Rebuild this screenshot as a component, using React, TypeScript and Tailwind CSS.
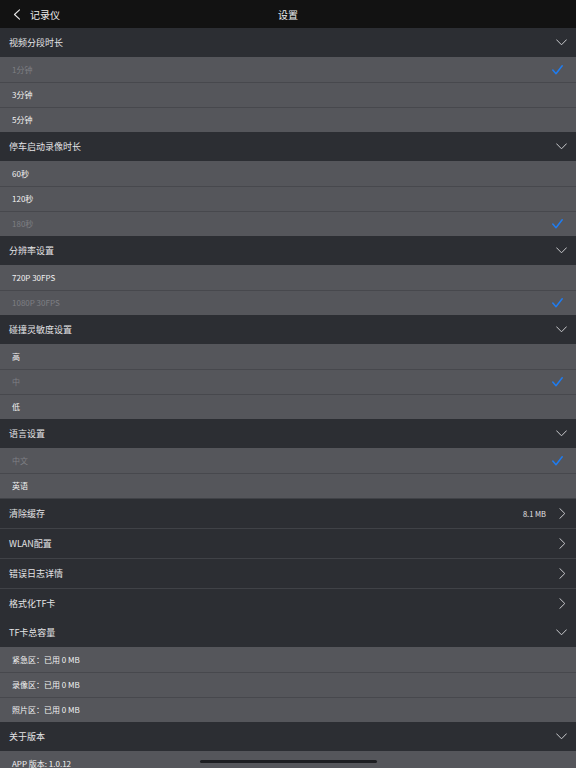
import React from 'react';

const FONT = { fontFamily: '"Noto Sans CJK SC", "Noto Sans", sans-serif' };

interface Section {
  title: string;
  options: string[];
  selected: number;
}

const SECTIONS: Section[] = [
  { title: '视频分段时长', options: ['1分钟', '3分钟', '5分钟'], selected: 0 },
  { title: '停车启动录像时长', options: ['60秒', '120秒', '180秒'], selected: 2 },
  { title: '分辨率设置', options: ['720P 30FPS', '1080P 30FPS'], selected: 1 },
  { title: '碰撞灵敏度设置', options: ['高', '中', '低'], selected: 1 },
  { title: '语言设置', options: ['中文', '英语'], selected: 0 },
];

const LINKS = [
  { title: '清除缓存', value: '8.1 MB' },
  { title: 'WLAN配置' },
  { title: '错误日志详情' },
  { title: '格式化TF卡' },
];

const TF_ROWS = ['紧急区：已用 0 MB', '录像区：已用 0 MB', '照片区：已用 0 MB'];

function ChevronDown() {
  return (
    <svg width="11" height="7" viewBox="0 0 11 7" className="shrink-0">
      <path d="M0.6 0.8 L5.5 5.8 L10.4 0.8" fill="none" stroke="#c9cacd" strokeWidth="1" strokeLinecap="round" strokeLinejoin="round" />
    </svg>
  );
}

function ChevronRight() {
  return (
    <svg width="7" height="11" viewBox="0 0 7 11" className="shrink-0">
      <path d="M0.8 0.6 L5.8 5.5 L0.8 10.4" fill="none" stroke="#c9cacd" strokeWidth="1" strokeLinecap="round" strokeLinejoin="round" />
    </svg>
  );
}

function Check() {
  return (
    <svg width="11" height="10" viewBox="0 0 11 10" className="shrink-0">
      <path d="M0.8 5 L4 8.8 L10.2 0.8" fill="none" stroke="#1f7cf0" strokeWidth="1.5" strokeLinecap="round" strokeLinejoin="round" />
    </svg>
  );
}

function Header({ title }: { title: string }) {
  return (
    <div className="h-[29px] bg-[#2c2e33] flex items-center justify-between pl-[9px] pr-[9px]">
      <span className="text-[9px] text-[#e4e4e6]">{title}</span>
      <ChevronDown />
    </div>
  );
}

function OptionRow({ label, active, first }: { label: string; active?: boolean; first?: boolean }) {
  return (
    <div
      className={`h-[25px] bg-[#55565b] flex items-center justify-between pl-[12px] pr-[13px] ${
        first ? '' : 'border-t border-[#47484d]'
      }`}
    >
      <span className={`text-[8px] ${active ? 'text-[#7e7f84]' : 'text-[#f2f2f2]'}`}>{label}</span>
      {active && <Check />}
    </div>
  );
}

export default function App() {
  return (
    <div className="relative w-[576px] h-[768px] overflow-hidden bg-[#55565b]" style={FONT}>
      {/* nav bar */}
      <div className="h-[28px] bg-[#121212] flex items-center relative">
        <div className="flex items-center pl-[13px] gap-[9px]">
          <svg width="8" height="11" viewBox="0 0 8 11">
            <path d="M6.5 0.8 L1.5 5.5 L6.5 10.2" fill="none" stroke="#e8e8e8" strokeWidth="1.1" strokeLinecap="round" strokeLinejoin="round" />
          </svg>
          <span className="text-[10px] text-[#ededed]">记录仪</span>
        </div>
        <span className="absolute left-1/2 -translate-x-1/2 text-[10px] text-[#ededed]">设置</span>
      </div>

      {SECTIONS.map((s) => (
        <div key={s.title}>
          <Header title={s.title} />
          {s.options.map((o, i) => (
            <OptionRow key={o} label={o} active={i === s.selected} first={i === 0} />
          ))}
        </div>
      ))}

      {LINKS.map((l) => (
        <div
          key={l.title}
          className="h-[30px] bg-[#2c2e33] border-t border-[#404247] flex items-center justify-between pl-[9px] pr-[10px]"
        >
          <span className="text-[9px] text-[#e4e4e6]">{l.title}</span>
          <div className="flex items-center gap-[13px]">
            {l.value && <span className="text-[7.5px] text-[#e4e4e6]">{l.value}</span>}
            <ChevronRight />
          </div>
        </div>
      ))}

      <Header title="TF卡总容量" />
      {TF_ROWS.map((t, i) => (
        <OptionRow key={t} label={t} first={i === 0} />
      ))}

      <Header title="关于版本" />
      <OptionRow label="APP 版本: 1.0.12" first />

      {/* home indicator */}
      <div className="absolute left-[200px] top-[760px] w-[177px] h-[3px] rounded-full bg-[#1d1e22]" />
    </div>
  );
}
